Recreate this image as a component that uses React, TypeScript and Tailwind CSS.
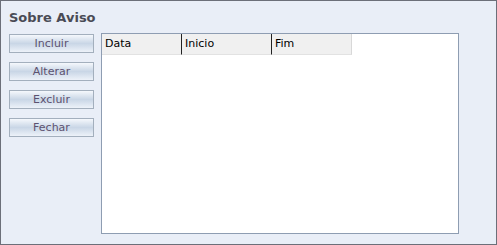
const buttons = ['Incluir', 'Alterar', 'Excluir', 'Fechar'];

const columns = [
  { label: 'Data', width: 'w-[80px]' },
  { label: 'Inicio', width: 'w-[90px]' },
  { label: 'Fim', width: 'w-[80px]' },
];

export default function App() {
  return (
    <div className="w-[497px] h-[245px] bg-[#e9eef7] border border-[#6c6f79] flex flex-col font-['DejaVu_Sans',sans-serif]">
      {/* titulo */}
      <div className="h-[32px] pl-[8px] pt-[9px] text-[13px] leading-[16px] font-bold text-[#4a4b55]">
        Sobre Aviso
      </div>

      <div className="flex flex-1 pl-[8px] pr-[37px] pb-[10px] gap-[7px]">
        {/* botoes */}
        <div className="flex flex-col gap-[9px] pt-[1px]">
          {buttons.map((b) => (
            <button
              key={b}
              className="w-[85px] h-[19px] border border-[#a3afbd] bg-gradient-to-b from-[#f5f8fc] via-[#c9d6e6] to-[#edf2f9] text-[11px] leading-[17px] text-[#5c5270] text-center"
            >
              {b}
            </button>
          ))}
        </div>

        {/* grid */}
        <div className="flex-1 bg-white border border-[#8e9db2]">
          <div className="flex h-[21px] text-[11px] text-black">
            {columns.map((c, i) => (
              <div
                key={c.label}
                className={`${c.width} bg-[#f0f0f0] border-b border-[#e2e2e2] flex items-center pl-[3px] ${
                  i < columns.length - 1 ? 'border-r border-r-[#222]' : 'border-r border-r-[#d8d8d8]'
                }`}
              >
                {c.label}
              </div>
            ))}
          </div>
        </div>
      </div>
    </div>
  );
}
